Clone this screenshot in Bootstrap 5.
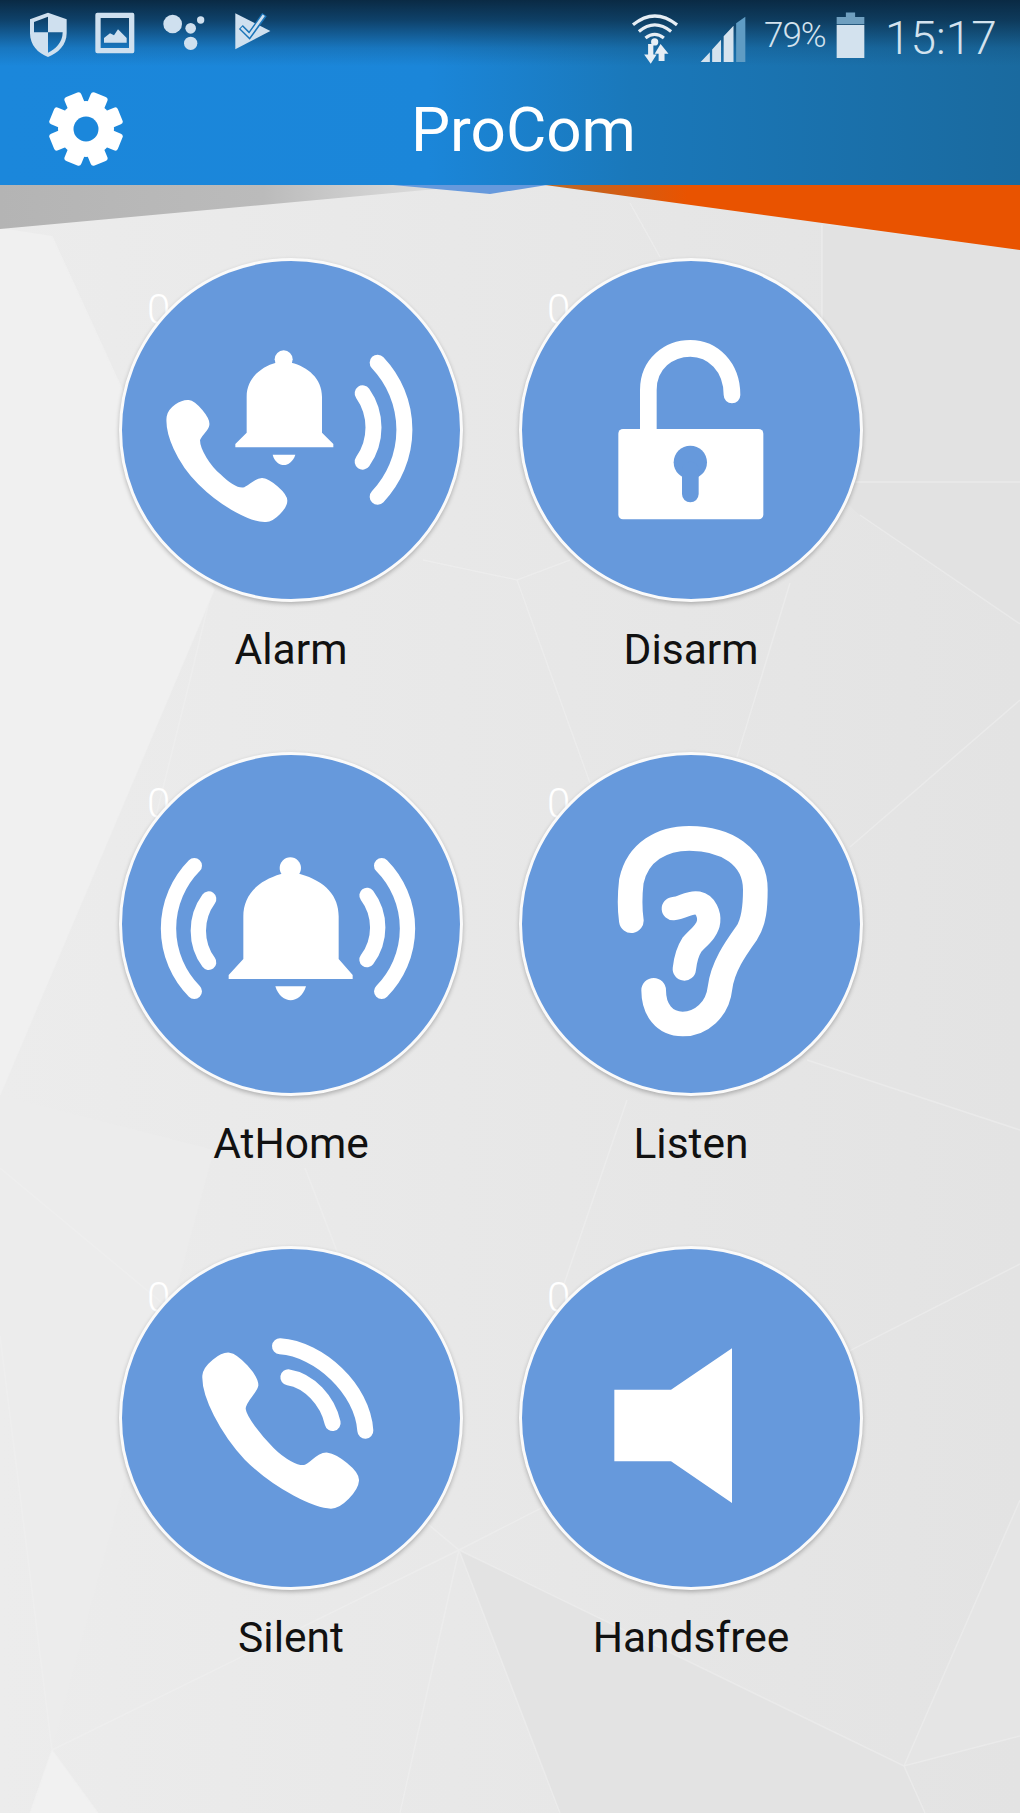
<!DOCTYPE html>
<html lang="en">
<head>
    <meta charset="UTF-8">
    <meta name="viewport" content="width=device-width, initial-scale=1.0">
    <title>ProCom</title>
    <link rel="stylesheet" href="https://cdn.jsdelivr.net/npm/bootstrap@5.3.0/dist/css/bootstrap.min.css">
    <style>
        html, body { height: 100%; }
        body { width: 1020px; height: 1813px; overflow: hidden; background: #e8e8e8; font-family: Roboto, "Liberation Sans", sans-serif; position: relative; }
        .facets { position: absolute; left: 0; top: 0; width: 1020px; height: 1813px; }
        .app-head { position: relative; height: 185px; background: linear-gradient(180deg, #0a2a44 0, rgba(10,42,68,.75) 20px, rgba(16,70,110,.25) 48px, rgba(16,70,110,0) 66px), linear-gradient(90deg, #1b87db 0, #1b86d9 42%, #1a78ba 62%, #1a6a9f 100%); }
        .status-row { height: 72px; padding-left: 29px; padding-top: 12px; }
        .status-ico { display: block; flex: none; }
        .status-gap { margin-left: 28px; }
        .status-signal { margin-left: 21px; margin-top: 4px; }
        .status-pct { width: 72px; margin-left: 18px; margin-top: 4px; font-size: 35px; line-height: 40px; font-weight: 300; color: #d3e2ee; letter-spacing: -1px; white-space: nowrap; }
        .status-time { width: 112px; margin-left: 20px; margin-right: 23px; margin-top: 3px; font-size: 46px; line-height: 46px; font-weight: 300; color: #d3e2ee; white-space: nowrap; }
        .bar-row { height: 113px; padding-left: 49px; }
        .bar-title { margin-left: 288px; margin-top: 2px; font-size: 62px; line-height: 72px; color: #fff; }
        .tile-grid { position: relative; width: 800px; margin-left: 91px; padding-top: 73px; }
        .tile { height: 494px; }
        .tile-btn { position: relative; width: 344px; height: 344px; }
        .tile-circle { position: relative; z-index: 1; width: 344px; height: 344px; border: 3px solid #fafafa; border-radius: 50%; background: #6699dc; box-shadow: 0 2px 4px rgba(0,0,0,.25); }
        .tile-circle svg { display: block; width: 338px; height: 338px; }
        .tile-zero { position: absolute; left: 28px; top: 28px; font-size: 42px; line-height: 48px; font-weight: 300; color: #fff; }
        .tile-name { margin-top: 24px; font-size: 42.5px; line-height: 48px; color: #111; }
    </style>
</head>
<body>

    <svg class="facets" viewBox="0 0 1020 1813" aria-hidden="true">
        <defs>
            <linearGradient id="base" x1="0" y1="0" x2="1" y2="0">
                <stop offset="0" stop-color="#ececec"/>
                <stop offset="1" stop-color="#e3e3e3"/>
            </linearGradient>
            <linearGradient id="shade" x1="0" y1="0" x2="1" y2="0">
                <stop offset="0" stop-color="#b4b4b4"/>
                <stop offset=".55" stop-color="#bbb"/>
                <stop offset="1" stop-color="#e6e6e6"/>
            </linearGradient>
            <linearGradient id="wedge" x1="0" y1="0" x2="1" y2="0">
                <stop offset="0" stop-color="#b9692a"/>
                <stop offset=".3" stop-color="#e95300"/>
            </linearGradient>
        </defs>
        <rect width="1020" height="1813" fill="url(#base)"/>
        <polygon points="0,228 52,236 214,590 0,1095" fill="#f0f0f0"/>
        <polygon points="822,225 1020,250 1020,624 860,515 822,482" fill="#e2e2e2"/>
        <polygon points="0,1095 214,1150 52,1750 0,1336" fill="#ececec"/>
        <polygon points="459,1550 904,1766 925,1813 560,1813" fill="#e3e3e3"/>
        <polygon points="904,1766 1020,1500 1020,1736" fill="#e5e5e5"/>
        <polygon points="30,1813 52,1750 98,1813" fill="#f1f1f1"/>
        <g stroke="#f1f1f1" stroke-width="1.5" fill="none" opacity=".5">
            <path d="M52 236 214 590 0 1095"/>
            <path d="M210 597 190 680 150 840"/>
            <path d="M630 203 660 257M822 225V482H1020"/>
            <path d="M860 515 1020 624M1020 700 850 847"/>
            <path d="M807 1060 1020 1130"/>
            <path d="M423 560 517 580 570 560M517 580 590 783M790 583 737 757M627 1100 563 1287"/>
            <path d="M0 1168 459 1550 904 1766 1020 1736"/>
            <path d="M52 1750 459 1550 1020 1264"/>
            <path d="M904 1766 1020 1500M904 1766 925 1813"/>
            <path d="M459 1550 560 1813M459 1550 400 1813"/>
            <path d="M0 1336 52 1750 98 1813M52 1750 30 1813"/>
            <path d="M305 1168 338 1254"/>
        </g>
        <polygon points="0,185 480,185 0,229" fill="url(#shade)"/>
        <polygon points="393,185 547,185 490,194" fill="#6699dc"/>
        <polygon points="545,185 1020,185 1020,250" fill="url(#wedge)"/>
    </svg>

    <header class="app-head">
        <div class="status-row d-flex align-items-start">
            <svg class="status-ico" width="38" height="46" viewBox="85 36 114 138" fill="#cfe0ef">
                <path fill-rule="evenodd" d="M142 38 198 58V100C198 135 172 160 142 171 112 160 88 135 88 100V58ZM142 50 100 66V97H142ZM142 97V158C164 148 186 128 186 97Z"/>
            </svg>
            <svg class="status-ico status-gap" width="40" height="42" viewBox="286 40 118 126" fill="#cfe0ef">
                <path fill-rule="evenodd" d="M292 42H398Q403 42 403 48V158Q403 164 398 164H292Q286 164 286 158V48Q286 42 292 42ZM302 58V148H387V58Z"/>
                <path d="M312 132V118L330 104 342 110 354 92 380 118V132Z"/>
            </svg>
            <svg class="status-ico status-gap" width="42" height="40" viewBox="488 52 126 112" fill="#cfe0ef">
                <circle cx="517" cy="84" r="28"/><circle cx="571" cy="97" r="16"/><circle cx="601" cy="72" r="11"/><circle cx="571" cy="142" r="20"/>
            </svg>
            <svg class="status-ico status-gap" width="38" height="38" viewBox="700 46 112 116" fill="none" stroke-linejoin="miter">
                <path fill="#cfe0ef" d="M705 50 812 104 705 160Z"/>
                <path stroke="#1a74b8" stroke-width="17" d="M722 92 748 118 794 54"/>
                <path stroke="#cfe0ef" stroke-width="8" d="M724 94 748 118 792 56"/>
            </svg>
            <div class="ms-auto d-flex align-items-start">
                <svg class="status-ico" width="48" height="52" viewBox="366 22 146 156" fill="none" stroke="#e6eef5" stroke-width="10">
                    <path d="M372 60Q438 6 506 60M390 80Q438 40 488 80M410 100Q438 78 466 100"/>
                    <circle cx="438" cy="112" r="6" fill="#e6eef5"/>
                    <path stroke-width="0" fill="#e6eef5" d="M418 118H434V150H444L426 178 406 150H418ZM456 118 480 148H468V170H450V148H438Z"/>
                </svg>
                <svg class="status-ico status-signal" width="46" height="46" viewBox="576 36 140 140">
                    <path fill="#d5e3ee" d="M578 176 606 146V176ZM613 138 640 108V176H613ZM648 98 678 66V176H648Z"/>
                    <path fill="#5f9cc4" d="M686 58 714 38V176H686Z"/>
                </svg>
                <div class="status-pct">79%</div>
                <svg class="status-ico" width="29" height="47" viewBox="976 34 88 140">
                    <path fill="#6f9fbf" d="M1006 34H1034V48H1062V70H978V48H1006Z"/>
                    <path fill="#d3e2ee" d="M978 72H1062V172H978Z"/>
                </svg>
                <div class="status-time">15:17</div>
            </div>
        </div>
        <div class="bar-row d-flex align-items-center">
            <svg width="74" height="74" viewBox="-37 -37 74 74">
                <g fill="#fff">
                    <circle r="28"/>
                    <rect x="-9" y="-37" width="18" height="22" rx="3" transform="rotate(22.5)"/>
                    <rect x="-9" y="-37" width="18" height="22" rx="3" transform="rotate(67.5)"/>
                    <rect x="-9" y="-37" width="18" height="22" rx="3" transform="rotate(112.5)"/>
                    <rect x="-9" y="-37" width="18" height="22" rx="3" transform="rotate(157.5)"/>
                    <rect x="-9" y="-37" width="18" height="22" rx="3" transform="rotate(202.5)"/>
                    <rect x="-9" y="-37" width="18" height="22" rx="3" transform="rotate(247.5)"/>
                    <rect x="-9" y="-37" width="18" height="22" rx="3" transform="rotate(292.5)"/>
                    <rect x="-9" y="-37" width="18" height="22" rx="3" transform="rotate(337.5)"/>
                </g>
                <circle r="12.5" fill="#1b87db"/>
            </svg>
            <div class="bar-title">ProCom</div>
        </div>
    </header>

    <main class="tile-grid">
        <div class="row g-0">
            <div class="col-6 tile d-flex flex-column align-items-center">
                <div class="tile-btn">
                    <span class="tile-zero">0</span>
                    <div class="tile-circle">
                        <svg viewBox="38 33 1014 1014" fill="#fff">
                            <circle cx="523" cy="328" r="27"/>
                            <path d="M378 592V582L412 548V440C412 385 455 350 500 338H546C595 350 638 385 638 440V548L672 582V592Z"/>
                            <path d="M490 614H558C552 635 535 645 524 645 510 645 495 635 490 614Z"/>
                            <path stroke="#fff" stroke-width="8" stroke-linejoin="round" d="M176 500C180 475 215 452 238 454 258 456 300 505 296 525 294 540 272 555 268 570 268 600 300 650 330 675 355 700 385 720 405 716 420 712 440 685 460 688 480 690 530 730 530 752 530 772 495 812 470 812 430 815 340 770 270 700 205 635 170 550 176 500Z"/>
                            <g fill="none" stroke="#fff" stroke-width="48" stroke-linecap="round">
                                <path d="M805 338A292 292 0 0 1 805 740"/>
                                <path d="M760 430A178 178 0 0 1 760 635"/>
                            </g>
                        </svg>
                    </div>
                </div>
                <div class="tile-name">Alarm</div>
            </div>
            <div class="col-6 tile d-flex flex-column align-items-center">
                <div class="tile-btn">
                    <span class="tile-zero">0</span>
                    <div class="tile-circle">
                        <svg viewBox="38 33 1014 1014" fill="#fff">
                            <path fill="none" stroke="#fff" stroke-width="50" stroke-linecap="round" d="M417 545V420C417 340 480 295 543 295 610 295 668 350 668 435"/>
                            <rect x="327" y="537" width="435" height="271" rx="14"/>
                            <circle cx="543" cy="637" r="50" fill="#6699dc"/>
                            <path d="M543 660V732" stroke="#6699dc" stroke-width="50" stroke-linecap="round"/>
                        </svg>
                    </div>
                </div>
                <div class="tile-name">Disarm</div>
            </div>
            <div class="col-6 tile d-flex flex-column align-items-center">
                <div class="tile-btn">
                    <span class="tile-zero">0</span>
                    <div class="tile-circle">
                        <svg viewBox="38 46 1014 1014" fill="#fff">
                            <circle cx="543" cy="385" r="32"/>
                            <path d="M358 718V706L402 658V530C402 470 440 425 515 403H572C650 425 688 470 688 530V658L730 706V718Z"/>
                            <path d="M498 740H590C582 768 562 782 544 782 526 782 506 768 498 740Z"/>
                            <g fill="none" stroke="#fff" stroke-width="46" stroke-linecap="round">
                                <path d="M255 378A268 268 0 0 0 255 755"/>
                                <path d="M298 478A161 161 0 0 0 298 668"/>
                                <path d="M817 378A268 268 0 0 1 817 755"/>
                                <path d="M773 467A161 161 0 0 1 773 660"/>
                            </g>
                        </svg>
                    </div>
                </div>
                <div class="tile-name">AtHome</div>
            </div>
            <div class="col-6 tile d-flex flex-column align-items-center">
                <div class="tile-btn">
                    <span class="tile-zero">0</span>
                    <div class="tile-circle">
                        <svg viewBox="38 46 1014 1014" fill="none" stroke="#fff" stroke-width="74" stroke-linecap="round" stroke-linejoin="round">
                            <path d="M366 543C360 500 362 460 366 425 385 335 460 296 540 296 650 296 738 350 738 450 738 500 735 545 712 580 680 625 640 680 632 745 625 810 575 853 520 853 465 853 433 810 433 752"/>
                            <path stroke-width="70" d="M492 507C520 505 540 485 565 490 590 495 600 525 598 545 595 575 565 595 548 615 535 635 528 660 525 688"/>
                        </svg>
                    </div>
                </div>
                <div class="tile-name">Listen</div>
            </div>
            <div class="col-6 tile d-flex flex-column align-items-center">
                <div class="tile-btn">
                    <span class="tile-zero">0</span>
                    <div class="tile-circle">
                        <svg viewBox="38 60 1014 1014" fill="#fff">
                            <path stroke="#fff" stroke-width="8" stroke-linejoin="round" d="M283 440C285 410 335 372 360 375 385 378 445 440 443 470 440 490 405 515 405 540 408 565 450 620 490 660 525 695 565 715 585 712 605 708 625 672 655 675 680 678 748 725 745 755 743 785 695 835 665 835 620 835 500 780 410 690 335 610 280 500 283 440Z"/>
                            <g fill="none" stroke="#fff" stroke-width="48" stroke-linecap="round">
                                <path d="M537 445C600 455 655 515 670 582"/>
                                <path d="M512 352C630 360 760 480 768 605"/>
                            </g>
                        </svg>
                    </div>
                </div>
                <div class="tile-name">Silent</div>
            </div>
            <div class="col-6 tile d-flex flex-column align-items-center">
                <div class="tile-btn">
                    <span class="tile-zero">0</span>
                    <div class="tile-circle">
                        <svg viewBox="38 60 1014 1014" fill="#fff">
                            <polygon points="315,482 485,482 668,358 668,822 485,697 315,697"/>
                        </svg>
                    </div>
                </div>
                <div class="tile-name">Handsfree</div>
            </div>
        </div>
    </main>

    <script src="https://cdn.jsdelivr.net/npm/bootstrap@5.3.0/dist/js/bootstrap.bundle.min.js"></script>
</body>
</html>
